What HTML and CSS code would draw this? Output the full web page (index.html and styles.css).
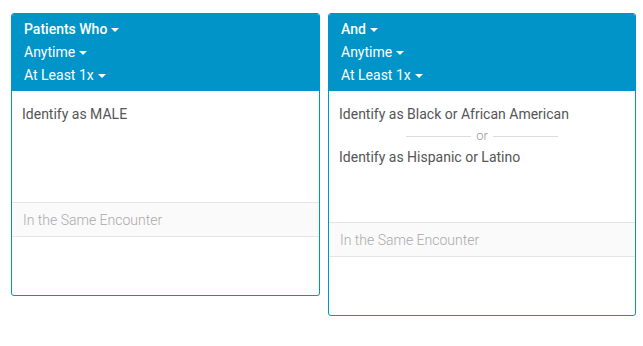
FILE: index.html
```html
<!DOCTYPE html>
<html>
<head>
<meta charset="utf-8">
<link rel="stylesheet" href="styles.css">
</head>
<body>
<div class="row">
  <div class="card">
    <div class="card-head">
      <div class="opt opt-main">Patients Who <span class="caret"></span></div>
      <div class="opt">Anytime <span class="caret"></span></div>
      <div class="opt">At Least 1x <span class="caret"></span></div>
    </div>
    <div class="card-body">
      <div class="item">Identify as MALE</div>
    </div>
    <div class="same">In the Same Encounter</div>
    <div class="foot"></div>
  </div>
  <div class="card card-wide">
    <div class="card-head">
      <div class="opt opt-main">And <span class="caret"></span></div>
      <div class="opt">Anytime <span class="caret"></span></div>
      <div class="opt">At Least 1x <span class="caret"></span></div>
    </div>
    <div class="card-body">
      <div class="item">Identify as Black or African American</div>
      <div class="or"><span class="rule"></span><span class="or-text">or</span><span class="rule"></span></div>
      <div class="item">Identify as Hispanic or Latino</div>
    </div>
    <div class="same">In the Same Encounter</div>
    <div class="foot"></div>
  </div>
</div>
</body>
</html>
```
FILE: styles.css
```css
* { box-sizing: border-box; }
body {
  margin: 0;
  background: #fff;
  font-family: Roboto, "Liberation Sans", sans-serif;
  font-size: 14px;
}
.row {
  display: flex;
  align-items: flex-start;
  gap: 8px;
  padding: 13px 0 0 11px;
}
.card {
  width: 309px;
  border: 1px solid #0094c9;
  border-radius: 3px;
  overflow: hidden;
  background: #fff;
}
.card-wide { width: 308px; }
.card-head {
  background: #0094c9;
  color: #fff;
  padding: 4px 12px 4px;
}
.opt {
  line-height: 23px;
  height: 23px;
  display: flex;
  align-items: center;
  gap: 4px;
}
.opt-main { font-weight: 500; }
.caret {
  width: 0;
  height: 0;
  border-left: 4px solid transparent;
  border-right: 4px solid transparent;
  border-top: 4px solid #fff;
  margin-top: 1px;
}
.card-body {
  min-height: 111px;
  padding: 13px 10px 55px;
  color: #555;
}
.item { line-height: 20px; height: 20px; }
.or {
  display: flex;
  align-items: center;
  justify-content: center;
  gap: 5px;
  height: 22px;
  margin-top: 1px;
  color: #999;
  font-size: 13px;
  font-weight: 300;
}
.rule {
  width: 65px;
  height: 1px;
  background: #ddd;
}
.or-text { line-height: 14px; }
.same {
  height: 35px;
  border-top: 1px solid #e5e5e5;
  border-bottom: 1px solid #e5e5e5;
  background: #fafafa;
  color: #aaa;
  font-weight: 300;
  padding: 0 11px;
  display: flex;
  align-items: center;
}
.foot { height: 58px; }
```
